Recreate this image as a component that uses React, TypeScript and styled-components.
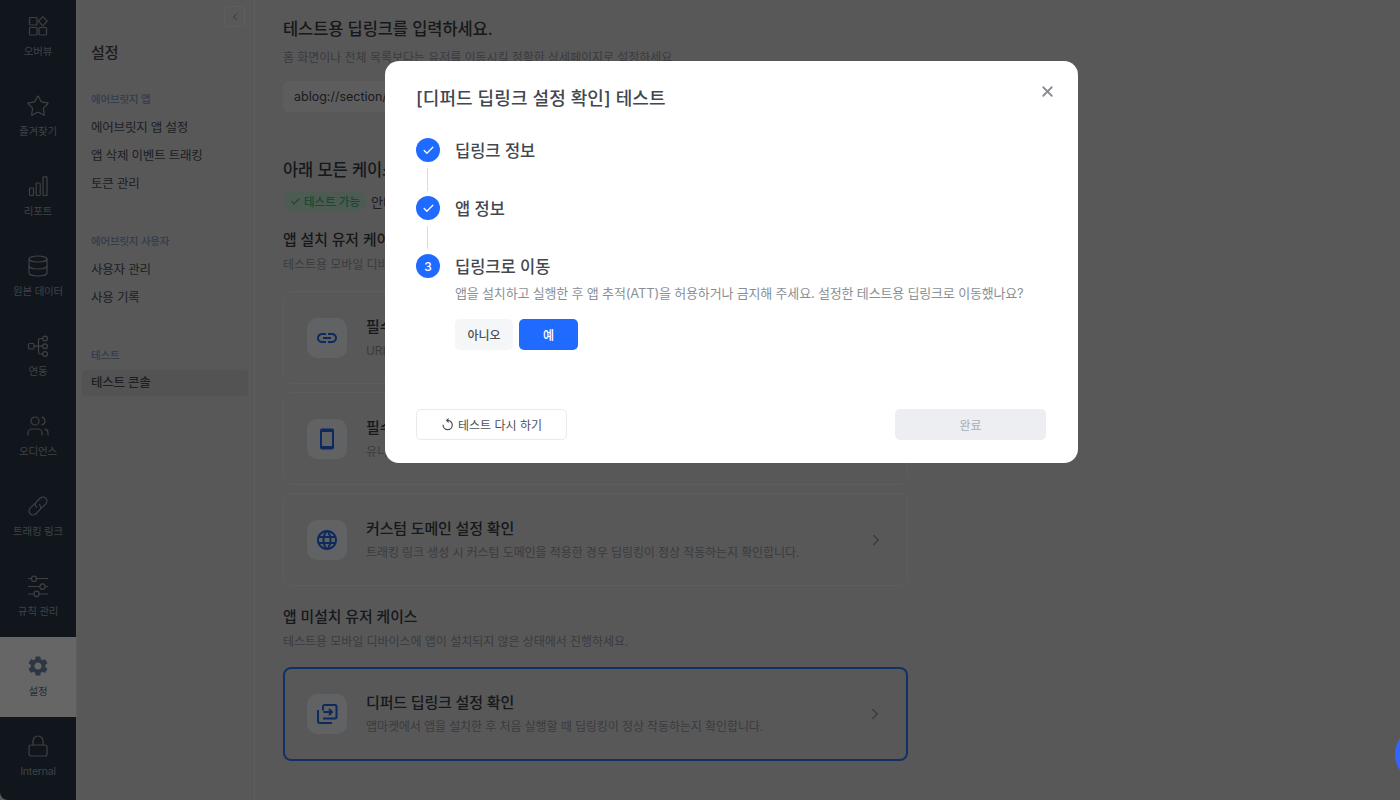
import React from 'react';
import styled, { createGlobalStyle } from 'styled-components';
import { Star, Database, Users, Lock, ChevronLeft, ChevronRight, Check, X } from 'lucide-react';
import { MdLink, MdLanguage, MdSettings } from 'react-icons/md';

const GlobalStyle = createGlobalStyle`
  html, body { margin: 0; height: 100%; overflow: hidden; background: #dcdcdd; }
  body { font-family: Inter, "Noto Sans CJK KR", sans-serif; color: #383c44; }
  * { box-sizing: border-box; }
`;

const Page = styled.div`
  display: flex;
  width: 1400px;
  height: 800px;
  overflow: hidden;
  background: #dcdcdd;
`;

const Rail = styled.nav`
  width: 76px;
  flex: none;
  background: #293748;
  border-bottom-left-radius: 8px;
  overflow: hidden;
`;

const RailList = styled.div`
  margin-top: -3px;
  display: flex;
  flex-direction: column;
`;

const RailItem = styled.div<{ $active?: boolean }>`
  height: 80px;
  padding-top: 17px;
  display: flex;
  flex-direction: column;
  align-items: center;
  gap: 6px;
  font-size: 10.5px;
  line-height: 16px;
  letter-spacing: -0.2px;
  color: ${({ $active }) => ($active ? '#6a6f79' : '#9aa3af')};
  background: ${({ $active }) => ($active ? '#ffffff' : 'transparent')};

  svg {
    display: block;
    width: 24px;
    height: 24px;
    flex: none;
  }
`;

const ActiveGear = styled(MdSettings)`
  color: #7088a8;
`;

const SubNav = styled.aside`
  position: relative;
  width: 179px;
  flex: none;
  border-left: 1px solid #e8e8ea;
  border-right: 1px solid #ececee;
  padding: 0 6px 0 5px;
`;

const CollapseBtn = styled.button`
  position: absolute;
  top: 6px;
  right: 9px;
  width: 21px;
  height: 21px;
  padding: 0;
  display: flex;
  align-items: center;
  justify-content: center;
  background: transparent;
  border: 1px solid #ececee;
  border-radius: 4px;
  color: #7d838c;
`;

const SubNavTitle = styled.h2`
  margin: 42px 0 0 9px;
  font-size: 15px;
  line-height: 22px;
  font-weight: 500;
  color: #43474e;
`;

const SubNavGroup = styled.div`
  display: flex;
  flex-direction: column;
  margin-top: 27px;

  & + & {
    margin-top: 35px;
  }
`;

const SubNavLabel = styled.div`
  padding-left: 9px;
  height: 23px;
  font-size: 10.5px;
  line-height: 18px;
  font-weight: 500;
  color: #8098c0;
  letter-spacing: -0.2px;
`;

const SubNavItem = styled.div<{ $active?: boolean }>`
  height: ${({ $active }) => ($active ? 26 : 28)}px;
  padding-left: 9px;
  font-size: 12.5px;
  line-height: ${({ $active }) => ($active ? 26 : 28)}px;
  letter-spacing: -0.2px;
  color: #4a4f57;
  border-radius: 4px;
  font-weight: ${({ $active }) => ($active ? 500 : 400)};
  background: ${({ $active }) => ($active ? '#cfcfd2' : 'transparent')};
`;

const Main = styled.main`
  flex: 1;
  padding: 17px 0 0 28px;
  min-width: 0;
`;

const Heading = styled.h3`
  margin: 0;
  font-size: 16.5px;
  line-height: 24px;
  font-weight: 500;
  color: #383c44;
  letter-spacing: -0.1px;
`;

const SectionHeading = styled.h3`
  margin: 0;
  font-size: 14.8px;
  line-height: 22px;
  font-weight: 500;
  color: #383c44;
`;

const Desc = styled.p<{ $top?: number }>`
  margin: ${({ $top }) => $top ?? 5}px 0 0;
  font-size: 12px;
  line-height: 18px;
  letter-spacing: -0.05px;
  color: #9095a0;
`;

const UrlField = styled.div`
  width: 625px;
  height: 31px;
  margin-top: 14px;
  padding-left: 11px;
  background: #e9e9eb;
  border-radius: 6px;
  font-size: 12.5px;
  line-height: 31px;
  color: #43474e;
`;

const CaseIntro = styled.div`
  margin-top: 46px;
`;

const BadgeRow = styled.div`
  display: flex;
  align-items: center;
  gap: 4px;
  margin-top: 9px;
  font-size: 13px;
  color: #43474e;
`;

const Badge = styled.span`
  display: inline-flex;
  align-items: center;
  gap: 3px;
  height: 20px;
  padding: 0 7px;
  border-radius: 10px;
  background: #c4e3cf;
  color: #3cb878;
  font-size: 11.5px;
  font-weight: 500;
`;

const Section = styled.section<{ $top: number }>`
  margin-top: ${({ $top }) => $top}px;
`;

const CardList = styled.div<{ $top: number }>`
  display: flex;
  flex-direction: column;
  gap: 8px;
  margin-top: ${({ $top }) => $top}px;
`;

const Card = styled.div<{ $selected?: boolean }>`
  width: 625px;
  height: ${({ $selected }) => ($selected ? 94 : 93)}px;
  padding: 0 22px 0 ${({ $selected }) => ($selected ? 22 : 23)}px;
  display: flex;
  align-items: center;
  gap: 19px;
  border-radius: 8px;
  border: ${({ $selected }) => ($selected ? '2px solid #2b7bff' : '1px solid #e8e8ea')};
  color: #9095a0;
`;

const CardIcon = styled.div`
  width: 40px;
  height: 40px;
  flex: none;
  border-radius: 10px;
  background: #f0f5fa;
  color: #2468e8;
  display: flex;
  align-items: center;
  justify-content: center;
`;

const CardBody = styled.div`
  flex: 1;
  min-width: 0;
`;

const CardTitle = styled.div`
  font-size: 15px;
  line-height: 22px;
  font-weight: 500;
  letter-spacing: -0.15px;
  color: #383c44;
`;

const CardDesc = styled.div`
  margin-top: 4px;
  font-size: 12px;
  line-height: 18px;
  letter-spacing: -0.1px;
  color: #9095a0;
`;

const Overlay = styled.div`
  position: fixed;
  inset: 0;
  background: rgba(0, 0, 0, 0.6);
  display: flex;
  justify-content: center;
  align-items: flex-start;
  padding: 61px 0 0 63px;
`;

const Modal = styled.div`
  position: relative;
  width: 693px;
  height: 402px;
  padding: 26px 32px 23px 31px;
  background: #fff;
  border-radius: 14px;
  display: flex;
  flex-direction: column;
`;

const ModalTitle = styled.h2`
  margin: 0;
  font-size: 18px;
  line-height: 24px;
  letter-spacing: 0.1px;
  font-weight: 500;
  color: #43474e;
`;

const CloseBtn = styled.button`
  position: absolute;
  top: 20px;
  right: 21px;
  width: 20px;
  height: 20px;
  padding: 0;
  border: 0;
  background: none;
  color: #878c94;
  display: flex;
  align-items: center;
  justify-content: center;
`;

const Steps = styled.div`
  margin-top: 27px;
  display: flex;
  flex-direction: column;
`;

const Step = styled.div`
  display: flex;
  gap: 15px;
`;

const StepCircle = styled.div`
  width: 24px;
  height: 24px;
  flex: none;
  border-radius: 50%;
  background: #1f6bff;
  color: #fff;
  font-size: 12px;
  font-weight: 500;
  display: flex;
  align-items: center;
  justify-content: center;
`;

const StepTitle = styled.div`
  font-size: 16.5px;
  line-height: 26px;
  font-weight: 500;
  color: #43474e;
`;

const StepConnector = styled.div`
  width: 1px;
  height: 23px;
  margin: 4px 0 5px 11px;
  background: #d9dce1;
`;

const StepDesc = styled.p`
  margin: 3px 0 0;
  font-size: 13px;
  line-height: 20px;
  letter-spacing: -0.17px;
  white-space: nowrap;
  color: #8a8f97;
`;

const StepActions = styled.div`
  display: flex;
  gap: 6px;
  margin-top: 16px;
`;

const AnswerBtn = styled.button<{ $primary?: boolean }>`
  width: ${({ $primary }) => ($primary ? 59 : 58)}px;
  height: 31px;
  padding: 0;
  border: 0;
  border-radius: 5px;
  font-family: inherit;
  font-size: 12px;
  font-weight: 500;
  color: ${({ $primary }) => ($primary ? '#fff' : '#4b5058')};
  background: ${({ $primary }) => ($primary ? '#1f6bff' : '#f5f6f8')};
`;

const Footer = styled.div`
  margin-top: auto;
  display: flex;
  justify-content: space-between;
`;

const RetryBtn = styled.button`
  width: 151px;
  height: 31px;
  padding: 0;
  display: flex;
  align-items: center;
  justify-content: center;
  gap: 4px;
  background: #fff;
  border: 1px solid #e8eaee;
  border-radius: 5px;
  font-family: inherit;
  font-size: 12px;
  color: #4b5058;
`;

const DoneBtn = styled.button`
  width: 151px;
  height: 31px;
  padding: 0;
  border: 0;
  border-radius: 5px;
  background: #eceef1;
  font-family: inherit;
  font-size: 12px;
  color: #a8adb5;
`;

const ChatBubble = styled.div`
  position: fixed;
  right: -51px;
  top: 726px;
  width: 56px;
  height: 56px;
  border-radius: 50%;
  background: #3366ff;
`;

const OverviewIcon = () => (
  <svg viewBox="0 0 24 24" fill="none" stroke="currentColor" strokeWidth="1.2">
    <rect x="3.5" y="3.5" width="7.5" height="7.5" rx="0.8" />
    <rect x="3.5" y="13.5" width="7.5" height="7.5" rx="0.8" />
    <rect x="13" y="13.5" width="7.5" height="7.5" rx="0.8" />
    <path d="M16.8 2.6l4.4 4.6-4.4 4.6-4.4-4.6z" strokeLinejoin="round" />
  </svg>
);

const BarsIcon = () => (
  <svg viewBox="0 0 24 24" fill="none" stroke="currentColor" strokeWidth="1.2">
    <rect x="3.5" y="14" width="4" height="7.5" rx="0.8" />
    <rect x="10.2" y="9" width="4" height="12.5" rx="0.8" />
    <rect x="17" y="2.8" width="4" height="18.7" rx="0.8" />
  </svg>
);

const FlowIcon = () => (
  <svg viewBox="0 0 24 24" fill="none" stroke="currentColor" strokeWidth="1.2">
    <rect x="2.5" y="9.5" width="5.5" height="5.5" rx="1" />
    <circle cx="19" cy="4.5" r="2.4" />
    <circle cx="19" cy="12.2" r="2.4" />
    <circle cx="19" cy="20" r="2.4" />
    <path d="M8 12.2h8.6M12.5 12.2V6c0-1 .5-1.5 1.5-1.5h2.6M12.5 12.2v6.3c0 1 .5 1.5 1.5 1.5h2.6" />
  </svg>
);

const ChainIcon = () => (
  <svg viewBox="0 0 24 24" fill="none" stroke="currentColor" strokeWidth="1.2" strokeLinecap="round">
    <g transform="rotate(-45 12 12)">
      <path d="M11 8H5a4 4 0 0 0 0 8h5a4 4 0 0 0 4-4" />
      <path d="M13 16h6a4 4 0 0 0 0-8h-5a4 4 0 0 0-4 4" />
    </g>
  </svg>
);

const SlidersIcon = () => (
  <svg viewBox="0 0 24 24" fill="none" stroke="currentColor" strokeWidth="1.2">
    <path d="M2 4.5h3.5M10.5 4.5H22M2 12.5h12M19 12.5h3M2 20h6M13 20h9" />
    <rect x="5.5" y="2" width="5" height="5.5" rx="2.4" />
    <rect x="14" y="9.8" width="5" height="5.5" rx="2.4" />
    <rect x="8" y="17.2" width="5" height="5.5" rx="2.4" />
  </svg>
);

const PhoneIcon = () => (
  <svg width="24" height="24" viewBox="0 0 24 24">
    <rect x="5" y="1.5" width="14" height="21" rx="2" fill="currentColor" />
    <rect x="7" y="5" width="10" height="14" fill="#f0f5fa" />
  </svg>
);

const DeferredIcon = () => (
  <svg width="24" height="24" viewBox="0 0 24 24" fill="none" stroke="currentColor" strokeWidth="2">
    <path d="M8 8.5V4.5C8 3.7 8.7 3 9.5 3H20c.8 0 1.5.7 1.5 1.5V15c0 .8-.7 1.5-1.5 1.5H8" />
    <path d="M3 8v11c0 1.2.8 2 2 2h12" />
    <path d="M8.5 10h8.5M14 7l3 3-3 3" strokeLinejoin="round" />
  </svg>
);

const RetryIcon = () => (
  <svg width="13" height="13" viewBox="0 0 24 24" fill="none" stroke="currentColor" strokeWidth="2.2" strokeLinecap="round" strokeLinejoin="round">
    <path d="M3.8 13a8.5 8.5 0 1 0 8.5-8.5H11" />
    <path d="M13.5 1.5L10.5 4.5l3 3" />
  </svg>
);

const railItems: { label: string; icon: React.ReactNode; active?: boolean }[] = [
  { label: '오버뷰', icon: <OverviewIcon /> },
  { label: '즐겨찾기', icon: <Star strokeWidth={1.2} /> },
  { label: '리포트', icon: <BarsIcon /> },
  { label: '원본 데이터', icon: <Database strokeWidth={1.2} /> },
  { label: '연동', icon: <FlowIcon /> },
  { label: '오디언스', icon: <Users strokeWidth={1.2} /> },
  { label: '트래킹 링크', icon: <ChainIcon /> },
  { label: '규칙 관리', icon: <SlidersIcon /> },
  { label: '설정', icon: <ActiveGear />, active: true },
  { label: 'Internal', icon: <Lock strokeWidth={1.2} /> },
];

const subNavGroups = [
  { label: '에어브릿지 앱', items: ['에어브릿지 앱 설정', '앱 삭제 이벤트 트래킹', '토큰 관리'] },
  { label: '에어브릿지 사용자', items: ['사용자 관리', '사용 기록'] },
  { label: '테스트', items: ['테스트 콘솔'], active: '테스트 콘솔' },
];

const installedCases = [
  { icon: <MdLink size={24} />, title: '필수 스킴 딥링크 설정 확인', desc: 'URL 스킴을 통해 앱이 열리고 설정한 페이지로 이동하는지 확인합니다.' },
  { icon: <PhoneIcon />, title: '필수 유니버설 링크 설정 확인', desc: '유니버설 링크를 통해 앱이 열리고 설정한 페이지로 이동하는지 확인합니다.' },
  { icon: <MdLanguage size={24} />, title: '커스텀 도메인 설정 확인', desc: '트래킹 링크 생성 시 커스텀 도메인을 적용한 경우 딥링킹이 정상 작동하는지 확인합니다.' },
];

export default function App() {
  return (
    <>
      <GlobalStyle />
      <Page>
        <Rail>
          <RailList>
            {railItems.map((item) => (
              <RailItem key={item.label} $active={item.active}>
                {item.icon}
                {item.label}
              </RailItem>
            ))}
          </RailList>
        </Rail>

        <SubNav>
          <CollapseBtn>
            <ChevronLeft size={12} />
          </CollapseBtn>
          <SubNavTitle>설정</SubNavTitle>
          {subNavGroups.map((group) => (
            <SubNavGroup key={group.label}>
              <SubNavLabel>{group.label}</SubNavLabel>
              {group.items.map((name) => (
                <SubNavItem key={name} $active={group.active === name}>
                  {name}
                </SubNavItem>
              ))}
            </SubNavGroup>
          ))}
        </SubNav>

        <Main>
          <Heading>테스트용 딥링크를 입력하세요.</Heading>
          <Desc $top={8}>홈 화면이나 전체 목록보다는 유저를 이동시킬 정확한 상세페이지로 설정하세요.</Desc>
          <UrlField>ablog://section/article</UrlField>

          <CaseIntro>
            <Heading>아래 모든 케이스를 테스트하세요.</Heading>
            <BadgeRow>
              <Badge>
                <Check size={11} strokeWidth={2.5} />
                테스트 가능
              </Badge>
              안내를 확인하세요.
            </BadgeRow>
          </CaseIntro>

          <Section $top={18}>
            <SectionHeading>앱 설치 유저 케이스</SectionHeading>
            <Desc>테스트용 모바일 디바이스에 앱이 설치된 상태에서 진행하세요.</Desc>
            <CardList $top={17}>
              {installedCases.map((item) => (
                <Card key={item.title}>
                  <CardIcon>{item.icon}</CardIcon>
                  <CardBody>
                    <CardTitle>{item.title}</CardTitle>
                    <CardDesc>{item.desc}</CardDesc>
                  </CardBody>
                  <ChevronRight size={18} />
                </Card>
              ))}
            </CardList>
          </Section>

          <Section $top={20}>
            <SectionHeading>앱 미설치 유저 케이스</SectionHeading>
            <Desc>테스트용 모바일 디바이스에 앱이 설치되지 않은 상태에서 진행하세요.</Desc>
            <CardList $top={16}>
              <Card $selected>
                <CardIcon>
                  <DeferredIcon />
                </CardIcon>
                <CardBody>
                  <CardTitle>디퍼드 딥링크 설정 확인</CardTitle>
                  <CardDesc>앱마켓에서 앱을 설치한 후 처음 실행할 때 딥링킹이 정상 작동하는지 확인합니다.</CardDesc>
                </CardBody>
                <ChevronRight size={18} />
              </Card>
            </CardList>
          </Section>
        </Main>
      </Page>

      <Overlay>
        <Modal>
          <ModalTitle>[디퍼드 딥링크 설정 확인] 테스트</ModalTitle>
          <CloseBtn>
            <X size={17} strokeWidth={2.6} />
          </CloseBtn>
          <Steps>
            <Step>
              <StepCircle>
                <Check size={13} strokeWidth={2.4} />
              </StepCircle>
              <StepTitle>딥링크 정보</StepTitle>
            </Step>
            <StepConnector />
            <Step>
              <StepCircle>
                <Check size={13} strokeWidth={2.4} />
              </StepCircle>
              <StepTitle>앱 정보</StepTitle>
            </Step>
            <StepConnector />
            <Step>
              <StepCircle>3</StepCircle>
              <div>
                <StepTitle>딥링크로 이동</StepTitle>
                <StepDesc>앱을 설치하고 실행한 후 앱 추적(ATT)을 허용하거나 금지해 주세요. 설정한 테스트용 딥링크로 이동했나요?</StepDesc>
                <StepActions>
                  <AnswerBtn>아니오</AnswerBtn>
                  <AnswerBtn $primary>예</AnswerBtn>
                </StepActions>
              </div>
            </Step>
          </Steps>
          <Footer>
            <RetryBtn>
              <RetryIcon />
              테스트 다시 하기
            </RetryBtn>
            <DoneBtn>완료</DoneBtn>
          </Footer>
        </Modal>
      </Overlay>
      <ChatBubble />
    </>
  );
}
